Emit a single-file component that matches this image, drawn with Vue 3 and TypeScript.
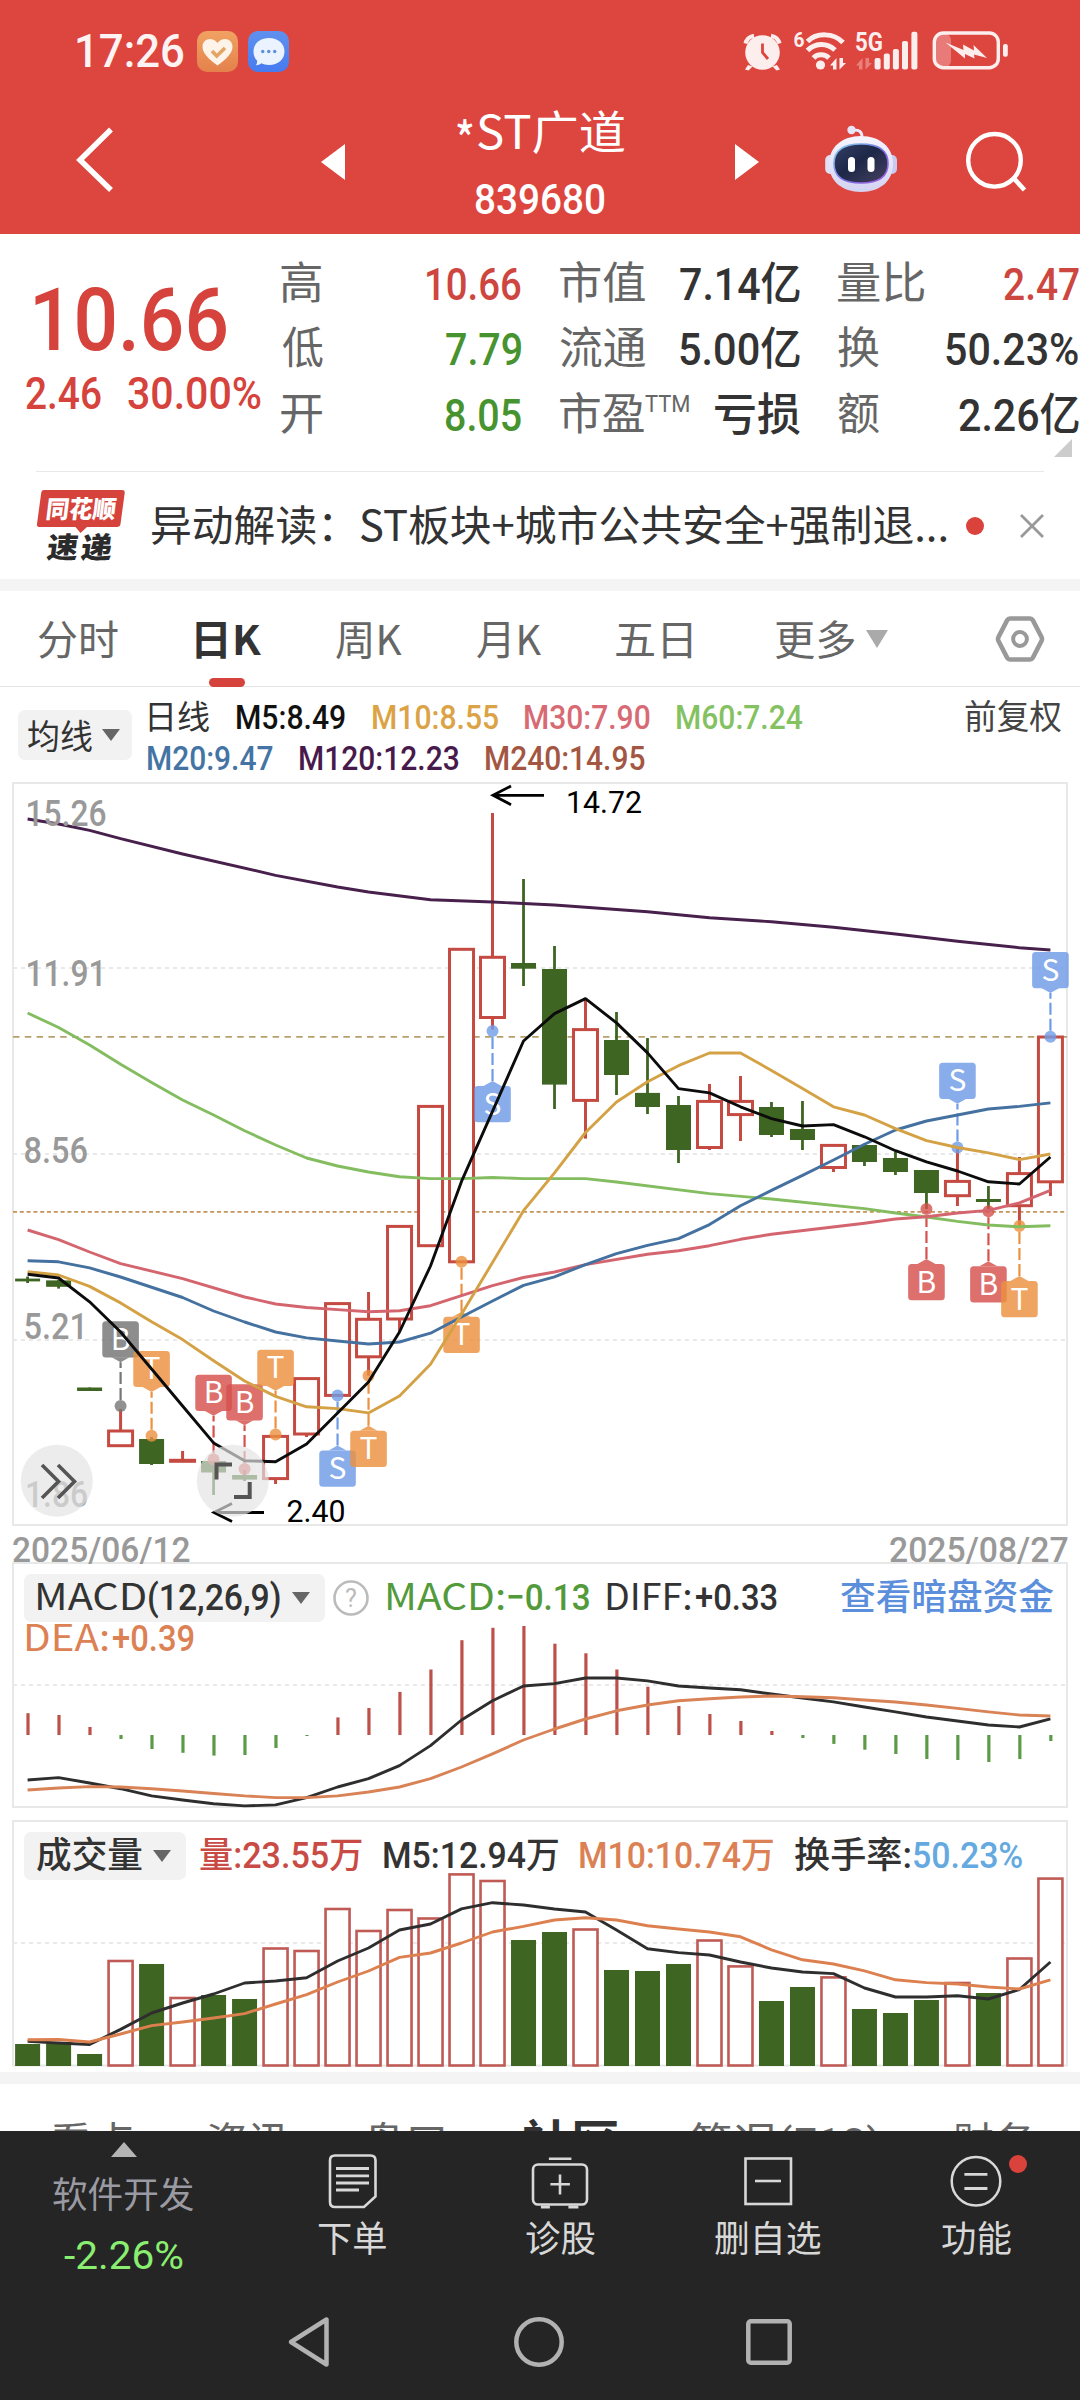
<script setup lang="ts">
type Tone = 'red' | 'green' | 'dark'
interface Stat { label: string; lw: number; value: string; vw: number; tone: Tone; sup?: string }
interface Legend { text: string; w: number; color: string }
interface Marker { i: number; t: string; dot: number; up: boolean; color: string }

/* Scales a text run horizontally so that its drawn glyphs span exactly the given width. */
const vFit = {
  mounted(el: HTMLElement, binding: { value: number }) {
    const cs = getComputedStyle(el)
    const ctx = document.createElement('canvas').getContext('2d')
    if (!ctx) return
    ctx.font = `${cs.fontWeight} ${cs.fontSize} ${cs.fontFamily}`
    const m = ctx.measureText((el.textContent || '').trim())
    const left = -m.actualBoundingBoxLeft
    const ink = m.actualBoundingBoxRight - left
    const box = el.getBoundingClientRect().width
    const s = binding.value / ink
    el.style.transformOrigin = '0 50%'
    el.style.transform = `scaleX(${s})`
    el.style.marginLeft = `${-left * s}px`
    el.style.marginRight = `${binding.value - box + left * s}px`
  },
}

const columns: Stat[][] = [
  [
    { label: '高', lw: 40.5, value: '10.66', vw: 94, tone: 'red' },
    { label: '低', lw: 41, value: '7.79', vw: 75, tone: 'green' },
    { label: '开', lw: 41, value: '8.05', vw: 75, tone: 'green' },
  ],
  [
    { label: '市值', lw: 85.5, value: '7.14亿', vw: 120, tone: 'dark' },
    { label: '流通', lw: 85.5, value: '5.00亿', vw: 120, tone: 'dark' },
    { label: '市盈', lw: 84.5, value: '亏损', vw: 85, tone: 'dark', sup: 'TTM' },
  ],
  [
    { label: '量比', lw: 86.5, value: '2.47', vw: 75, tone: 'red' },
    { label: '换', lw: 41, value: '50.23%', vw: 132.5, tone: 'dark' },
    { label: '额', lw: 41, value: '2.26亿', vw: 120, tone: 'dark' },
  ],
]

const maRow1: Legend[] = [
  { text: '日线', w: 60.8, color: '#333' },
  { text: 'M5:8.49', w: 108.5, color: '#111' },
  { text: 'M10:8.55', w: 125.4, color: '#dba346' },
  { text: 'M30:7.90', w: 125, color: '#d86a74' },
  { text: 'M60:7.24', w: 126, color: '#84c261' },
]
const maRow2: Legend[] = [
  { text: 'M20:9.47', w: 124.7, color: '#4474a4' },
  { text: 'M120:12.23', w: 159, color: '#481a4c' },
  { text: 'M240:14.95', w: 158.7, color: '#a35642' },
]

const X0 = 27.6
const STEP = 30.995
const cx = (i: number) => X0 + STEP * i
const line = (v: number[]) => v.map((y, i) => `${cx(i).toFixed(1)},${y}`).join(' ')
const sparse = (v: [number, number][]) => v.map(([i, y]) => `${cx(i).toFixed(1)},${y}`).join(' ')

/* open/close body top, body bottom, wick top, wick bottom, rising? */
const candles: [number, number, number, number, boolean][] = [
  [1278.6, 1281.4, 1276.5, 1283, false],
  [1280.4, 1286.8, 1280, 1288.6, false],
  [1387.5, 1391, 1387.5, 1391, false],
  [1431, 1445.7, 1409, 1431, true],
  [1439, 1464, 1437, 1465, false],
  [1460.3, 1461.3, 1451, 1460, true],
  [1461, 1472.5, 1461, 1495, false],
  [1475, 1479.6, 1470, 1481, false],
  [1436.4, 1478.6, 1478, 1484, true],
  [1378.6, 1434, 1434, 1437, true],
  [1303.6, 1395.4, 1395, 1395, true],
  [1319.3, 1356.8, 1292, 1375.7, true],
  [1226.4, 1319, 1319, 1332, true],
  [1106.4, 1245.7, 1245, 1245, true],
  [949.3, 1261.8, 1261, 1261, true],
  [957.3, 1017.5, 813, 1029.5, true],
  [963, 968.7, 879, 986, false],
  [969, 1084.6, 946, 1109, false],
  [1029.6, 1100.4, 999, 1138.6, true],
  [1040, 1075, 1012, 1095, false],
  [1092.9, 1107, 1038, 1114, false],
  [1105, 1150, 1096, 1163, false],
  [1101.4, 1147.5, 1084, 1150, true],
  [1101.4, 1114.6, 1076, 1141, true],
  [1107, 1135, 1102, 1137, false],
  [1129, 1140, 1101, 1150, false],
  [1145.4, 1167.5, 1167, 1172, true],
  [1145, 1162, 1145, 1166, false],
  [1158, 1172, 1152, 1175, false],
  [1170, 1193, 1170, 1209, false],
  [1181.4, 1195.7, 1147.5, 1206, true],
  [1199, 1202, 1186, 1209, false],
  [1173.6, 1205.7, 1157, 1226, true],
  [1037, 1181.8, 1181, 1196, true],
]

const BLUE = '#6f9ce6'
const ORANGE = '#ec9140'
const RED = '#d6514d'
const GRAY = '#757575'
const markers: Marker[] = [
  { i: 3, t: 'B', dot: 1406, up: true, color: GRAY },
  { i: 4, t: 'T', dot: 1435.7, up: true, color: ORANGE },
  { i: 6, t: 'B', dot: 1459.5, up: true, color: RED },
  { i: 7, t: 'B', dot: 1469, up: true, color: RED },
  { i: 8, t: 'T', dot: 1434.6, up: true, color: ORANGE },
  { i: 10, t: 'S', dot: 1395.6, up: false, color: BLUE },
  { i: 11, t: 'T', dot: 1375.7, up: false, color: ORANGE },
  { i: 14, t: 'T', dot: 1261.8, up: false, color: ORANGE },
  { i: 15, t: 'S', dot: 1031, up: false, color: BLUE },
  { i: 29, t: 'B', dot: 1209, up: false, color: RED },
  { i: 30, t: 'S', dot: 1147.6, up: true, color: BLUE },
  { i: 31, t: 'B', dot: 1211.2, up: false, color: RED },
  { i: 32, t: 'T', dot: 1226, up: false, color: ORANGE },
  { i: 33, t: 'S', dot: 1036.8, up: true, color: BLUE },
]
const boxTop = (m: Marker) => (m.up ? m.dot - 84.8 : m.dot + 55)
const pointer = (m: Marker) => {
  const x = cx(m.i)
  const y = boxTop(m)
  return m.up
    ? `${x - 9},${y + 36} ${x + 9},${y + 36} ${x},${y + 41}`
    : `${x - 9},${y} ${x + 9},${y} ${x},${y - 5}`
}

const m120 = sparse([[0, 819], [1, 824], [2, 830.3], [3, 838.7], [5, 854], [8, 875.3], [10, 887], [11, 892], [13, 899.7], [15, 902], [17, 905], [20, 911.7], [22, 917.7], [24, 921.8], [26, 927.3], [28, 934], [30, 941.3], [32, 947.7], [33, 950]])
const m60 = sparse([[0, 1013], [1, 1027.5], [2, 1045], [3, 1064.3], [4, 1082.5], [5, 1100], [6, 1115], [7, 1130.7], [8, 1145], [9, 1158], [10, 1166], [11, 1172], [12, 1176.8], [13, 1178.6], [14, 1178.6], [15, 1177.5], [16, 1178.6], [18, 1178.6], [19, 1182], [22, 1193.6], [24, 1199], [27, 1208.6], [28, 1213], [29, 1217], [30, 1221.4], [31, 1225], [32, 1226.8], [33, 1225.7]])
const m30 = sparse([[0, 1230], [1, 1239.6], [2, 1252], [3, 1263.6], [5, 1278.6], [7, 1297], [8, 1304], [9, 1307.5], [10, 1309.6], [11, 1311.8], [12, 1310.7], [13, 1305.7], [14, 1295.7], [15, 1285.7], [16, 1277.5], [17, 1272], [18, 1264.6], [20, 1254.3], [21, 1250.7], [22, 1245.7], [23, 1239.3], [24, 1234.3], [27, 1223.2], [28, 1219], [29, 1216.8], [30, 1213], [31, 1210.4], [32, 1202.9], [33, 1190.4]])
const m20 = sparse([[0, 1260.7], [1, 1261.8], [2, 1267.9], [3, 1277], [5, 1297.5], [6, 1311], [7, 1322], [8, 1332], [9, 1337.9], [10, 1341], [11, 1344], [12, 1342], [13, 1333.2], [14, 1317], [15, 1301], [16, 1285.4], [17, 1276.8], [18, 1264.6], [19, 1253.6], [20, 1245.4], [21, 1238.6], [22, 1224.6], [23, 1205.7], [24, 1190.4], [25, 1175.4], [26, 1160], [27, 1144.3], [28, 1130], [29, 1121], [30, 1115], [31, 1109], [32, 1106.4], [33, 1102.9]])
const m10 = line([1271.8, 1275, 1286.4, 1302.9, 1321.8, 1339.6, 1360.7, 1381, 1396.4, 1406.8, 1408.6, 1412.9, 1396, 1364.3, 1314.3, 1262.5, 1210.7, 1172.9, 1132.5, 1102, 1081.8, 1065.7, 1053, 1053, 1070.4, 1088.6, 1106.8, 1115, 1128.6, 1140.7, 1147.5, 1152.9, 1159.6, 1154])
const m5 = line([1274.3, 1278, 1301.8, 1332, 1369, 1406, 1442.9, 1460.7, 1461.8, 1444, 1413, 1382, 1332, 1266, 1181.4, 1111.4, 1041, 1013.6, 998.6, 1022.9, 1052.9, 1088.6, 1092.9, 1106.8, 1118.6, 1126, 1124.6, 1136.8, 1150.7, 1161.8, 1171, 1181.8, 1184, 1157])

const ZERO = 1735
const macd = [1713.2, 1715, 1727, 1739, 1749, 1752.8, 1755.6, 1755, 1748, 1736, 1717.4, 1708, 1691.9, 1669.5, 1640.2, 1627.8, 1626, 1643.7, 1653.3, 1669.5, 1686.7, 1706, 1714, 1721, 1731, 1738, 1743.9, 1749.7, 1754, 1759, 1760, 1762, 1759, 1741]
const diff = line([1780, 1777.6, 1783, 1788.7, 1795.9, 1800, 1803.8, 1805.9, 1804.9, 1797.6, 1787, 1778.7, 1765.6, 1745.6, 1720, 1700.8, 1686, 1683.6, 1678, 1678, 1680.9, 1686, 1688, 1689.8, 1694, 1698, 1701.9, 1707, 1711.9, 1717, 1721, 1725, 1727, 1718.8])
const dea = line([1790, 1788, 1786.6, 1787, 1788.7, 1791, 1793.5, 1795.9, 1797.6, 1797.6, 1795.9, 1792, 1787, 1778.7, 1767, 1753.9, 1740, 1729, 1719, 1710.8, 1705, 1700.8, 1698.8, 1697, 1696, 1696.7, 1697.7, 1700, 1702, 1705, 1708.4, 1711.9, 1715, 1716])

const FLOOR = 2065.5
const volTop = [2044, 2043, 2054, 1961, 1964, 1998, 1995, 1999, 1948.5, 1951, 1909, 1931, 1910, 1918.5, 1874.4, 1881, 1940, 1932, 1929.5, 1970, 1971, 1964, 1940.5, 1966.4, 2001, 1987, 1977.4, 2009, 2013, 2000, 1983, 1993, 1958.5, 1878.6]
const volM5 = line([2041.4, 2043, 2044.5, 2029.4, 2013, 2003, 1994, 1983, 1981, 1977.7, 1961, 1948, 1930, 1924, 1908.9, 1902.7, 1905, 1909, 1912, 1930, 1948.8, 1952.6, 1955, 1962, 1968, 1972, 1973.6, 1988, 1997, 1997, 1995.7, 1999, 1989.5, 1962])
const volM10 = line([2039.7, 2039.5, 2042, 2034, 2025.6, 2022, 2018, 2013.6, 2004, 1994.6, 1982, 1971, 1957.4, 1953, 1943, 1932, 1926.4, 1920, 1917.8, 1920, 1925.7, 1929, 1932, 1936.8, 1949.8, 1959.8, 1964, 1970.9, 1979.8, 1982.6, 1984, 1987, 1989, 1979.8])

const axis = [
  { t: '15.26', x: 25.5, y: 826, w: 81 },
  { t: '11.91', x: 25.5, y: 985.7, w: 81 },
  { t: '8.56', x: 23.5, y: 1162.5, w: 64.5 },
  { t: '5.21', x: 23.5, y: 1339.3, w: 64.5 },
  { t: '1.86', x: 25, y: 1507, w: 63 },
]
</script>

<template>
  <div class="screen" lang="zh-CN">
    <header class="top">
      <div class="status">
        <span class="clock" v-fit="107">17:26</span>
        <svg class="app-icon heart" width="41" height="41" viewBox="0 0 41 41">
          <defs>
            <linearGradient id="og" x1="0" y1="0" x2="0" y2="1"><stop offset="0" stop-color="#f0a262" /><stop offset="1" stop-color="#e4814c" /></linearGradient>
          </defs>
          <rect width="41" height="41" rx="10" fill="url(#og)" />
          <path d="M20.5 34.5C11 27.5 5.5 22 5.5 15.500C5.500 11 9 8 13 8c3 0 5.500 1.300 7.500 4c2-2.700 4.500-4 7.500-4c4 0 7.500 3 7.500 7.500C35.500 22 30 27.500 20.500 34.500z" fill="#fdf3e8" />
          <path d="M15 20l4.700 5L28 17" fill="none" stroke="#e3a566" stroke-width="3.600" />
        </svg>
        <svg class="app-icon" width="41" height="41" viewBox="0 0 41 41">
          <defs>
            <linearGradient id="bg" x1="0" y1="0" x2="0" y2="1"><stop offset="0" stop-color="#6090ee" /><stop offset="1" stop-color="#467bf0" /></linearGradient>
          </defs>
          <rect width="41" height="41" rx="10" fill="url(#bg)" />
          <path d="M21 7c9 0 15.500 5.600 15.500 13.500S30 34 21 34c-3 0-5.500-.700-7.500-1.700C12 33.500 10 34.300 7.800 34.300c1-1.300 1.500-3 1.300-4.800C6.500 27 5.500 24 5.500 20.500C5.500 12.600 12 7 21 7z" fill="#eaf3ff" />
          <g fill="#5b8fdd"><circle cx="14.700" cy="20.500" r="1.700" /><circle cx="20.700" cy="20.500" r="1.700" /><circle cx="26.700" cy="20.500" r="1.700" /></g>
        </svg>
        <svg class="signals" width="272" height="46" viewBox="740 28 272 46">
          <g fill="#fdeeee" stroke="none">
            <circle cx="763.500" cy="52.500" r="17.300" />
            <path d="M749 65l-3 4.500 3.500 1 4-4zM778 65l3 4.500-3.500 1-4-4z" />
          </g>
          <g fill="none" stroke="#fdeeee" stroke-width="4.200">
            <path d="M746.500 43.500c1-4 4-7 8.500-7.800M780.500 43.500c-1-4-4-7-8.500-7.800" />
          </g>
          <path d="M763.500 43.500v9l5.500 6.500" fill="none" stroke="#dd453f" stroke-width="2.800" />
          <text x="794.500" y="46.500" font-size="21" font-weight="700" textLength="11" lengthAdjust="spacingAndGlyphs" fill="#fdeeee">6</text>
          <g fill="none" stroke="#fdeeee" stroke-width="5">
            <path d="M808.500 41.500c9-9 26-9 35.500 1" />
            <path d="M808.500 50.500c7-7.500 19-8.500 27.500-.500" />
            <path d="M814.500 58c3.500-4 11-4.500 15.500 0" />
          </g>
          <circle cx="821.500" cy="65" r="4.600" fill="#fdeeee" />
          <g fill="#fdeeee">
            <path d="M831 65.500l6.500-7.500V69.500H834V65.500zM847 63l-6.500 6.500V58H844V63z" />
          </g>
          <g fill="#fdeeee" opacity=".35">
            <path d="M857 65.500l6.500-7.500V69.500H860V65.500zM873 63l-6.500 6.500V58H870V63z" />
          </g>
          <text x="856" y="50.700" font-size="26" font-weight="700" textLength="28" lengthAdjust="spacingAndGlyphs" fill="#fdeeee">5G</text>
          <g fill="#fdeeee">
            <rect x="875.600" y="58" width="6" height="11.500" rx="2" />
            <rect x="884.800" y="53.500" width="6" height="16" rx="2" />
            <rect x="893.900" y="49" width="6" height="20.500" rx="2" />
            <rect x="903" y="41" width="6" height="28.500" rx="2" />
            <rect x="912.400" y="31.700" width="6" height="37.800" rx="2" />
          </g>
          <rect x="936" y="34" width="16" height="33" rx="6" fill="#e87a77" />
          <rect x="935.300" y="33" width="64" height="34.700" rx="9" fill="none" stroke="#fdeeee" stroke-width="3.400" />
          <rect x="1004" y="44" width="4.800" height="12.700" rx="2" fill="#fdeeee" />
          <path d="M946.500 42.500l18 7.500-.500-5.500 11 6-.500-5.500L988 58l-13-3.500.500 4-9.500-4.500v4.500z" fill="#fdeeee" />
        </svg>
      </div>
      <nav class="nav">
        <svg class="back" width="40" height="68" viewBox="76 126 40 68"><path d="M111 129.500L80 160l31 30" fill="none" stroke="#fff" stroke-width="5.500" /></svg>
        <svg class="prev" width="24" height="36" viewBox="0 0 24 36"><path d="M0 18L24 0v36z" fill="#fff" /></svg>
        <div class="title">
          <div class="name"><span class="star" v-fit="16">*</span><span v-fit="147">ST广道</span></div>
          <div class="code"><span v-fit="128.5">839680</span></div>
        </div>
        <svg class="next" width="24" height="36" viewBox="0 0 24 36"><path d="M24 18L0 0v36z" fill="#fff" /></svg>
        <svg class="robot" width="72" height="68" viewBox="825 125 72 68">
          <defs>
            <linearGradient id="shell" x1="0" y1="0" x2="0" y2="1"><stop offset="0" stop-color="#f6f5fe" /><stop offset="1" stop-color="#d3d3f2" /></linearGradient>
            <linearGradient id="glass" x1="0" y1="0" x2="1" y2="1"><stop offset="0" stop-color="#353f66" /><stop offset=".45" stop-color="#1d2747" /><stop offset="1" stop-color="#47425f" /></linearGradient>
            <linearGradient id="rim" x1="0" y1="0" x2="1" y2="1"><stop offset="0" stop-color="#82d2ee" /><stop offset=".55" stop-color="#7a6fe0" /><stop offset="1" stop-color="#a45be0" /></linearGradient>
          </defs>
          <path d="M852 130.500c7-1.500 10 1.500 10 6" fill="none" stroke="#ecebfb" stroke-width="2.800" />
          <circle cx="851.500" cy="130" r="4.200" fill="#e6e5fa" />
          <rect x="825.200" y="155" width="10" height="19" rx="5" fill="#dfdff6" />
          <rect x="887" y="155" width="10" height="19" rx="5" fill="#c9caf0" />
          <path d="M861 136c19 0 32 11 32 28s-13 28-32 28s-32-11-32-28s13-28 32-28z" fill="url(#shell)" />
          <path d="M861 144c17 0 27 6 27 19.500S878 183 861 183s-27-6-27-19.500S844 144 861 144z" fill="url(#glass)" stroke="url(#rim)" stroke-width="1.600" />
          <rect x="848" y="157" width="7" height="15" rx="3.500" fill="#fff" />
          <rect x="867.500" y="157" width="7" height="15" rx="3.500" fill="#fff" />
        </svg>
        <svg class="search" width="62" height="62" viewBox="965 131 62 62"><circle cx="994.500" cy="160.300" r="26.300" fill="none" stroke="#fff" stroke-width="4.400" /><path d="M1013.500 178l11 12" stroke="#fff" stroke-width="4.600" /></svg>
      </nav>
    </header>

    <section class="quote">
      <div class="price">
        <div class="last"><span v-fit="191">10.66</span></div>
        <div class="chg"><span v-fit="75">2.46</span><span v-fit="132.4">30.00%</span></div>
      </div>
      <div v-for="(col, c) in columns" :key="c" class="col">
        <div v-for="s in col" :key="s.label" class="stat">
          <div class="lab"><span v-fit="s.lw">{{ s.label }}</span><span v-if="s.sup" class="sup" v-fit="43.7">{{ s.sup }}</span></div>
          <div class="val" :class="s.tone"><span v-fit="s.vw">{{ s.value }}</span></div>
        </div>
      </div>
    </section>
    <div class="corner"><svg width="18" height="18" viewBox="0 0 18 18"><path d="M18 0v18H0z" fill="#ccc" /></svg></div>

    <section class="news">
      <svg class="logo" width="90" height="76" viewBox="36 487 90 76">
        <path d="M44 489h78q3 0 2.700 3l-4.200 31q-.500 3-3.500 3H87l-6.500 6-5-6H40q-3.500 0-3-3l4.200-31q.400-3 2.800-3z" fill="#d5433c" />
        <text class="brand" x="0" y="0" transform="translate(45 517) skewX(-7)" font-size="24.500" textLength="70" lengthAdjust="spacingAndGlyphs" fill="#fff">同花顺</text>
        <text class="brand" x="0" y="0" transform="translate(46 557) skewX(-7)" font-size="29" textLength="31" lengthAdjust="spacingAndGlyphs" fill="#2b2b2b">速</text>
        <text class="brand" x="0" y="0" transform="translate(80 557) skewX(-7)" font-size="29" textLength="31" lengthAdjust="spacingAndGlyphs" fill="#2b2b2b">递</text>
      </svg>
      <span class="headline" v-fit="794.4">异动解读：ST板块+城市公共安全+强制退...</span>
      <i class="dot"></i>
      <svg class="close" width="24" height="24" viewBox="0 0 24 24"><path d="M1 1l22 22M23 1L1 23" stroke="#999" stroke-width="2.800" /></svg>
    </section>

    <nav class="tabs">
      <div class="tab t0"><span v-fit="80">分时</span></div>
      <div class="tab t1 active"><span v-fit="65.500">日K</span></div>
      <div class="tab t2"><span v-fit="66">周K</span></div>
      <div class="tab t3"><span v-fit="64.700">月K</span></div>
      <div class="tab t4"><span v-fit="76">五日</span></div>
      <div class="tab t5"><span v-fit="79.500">更多</span></div>
      <svg class="more" width="22" height="18" viewBox="0 0 22 18"><path d="M0 0h22L11 18z" fill="#aaa" /></svg>
      <svg class="gear" width="50" height="48" viewBox="0 0 50 48"><path d="M15 3.500h20q1.800 0 2.800 1.600L46.500 22q1 2 0 4L37.800 42.900q-1 1.600-2.800 1.600H15q-1.800 0-2.800-1.600L3.500 26q-1-2 0-4L12.200 5.100Q13.200 3.500 15 3.500z" fill="none" stroke="#999" stroke-width="4.600" /><circle cx="25" cy="24" r="6.900" fill="none" stroke="#999" stroke-width="4" /></svg>
    </nav>

    <section class="ma">
      <button class="chip machip"><span v-fit="64">均线</span><svg width="18" height="12" viewBox="0 0 18 12"><path d="M0 0h18L9 12z" fill="#666" /></svg></button>
      <div class="ma-rows">
        <div class="ma-row"><span v-for="l in maRow1" :key="l.text" v-fit="l.w" :style="{ color: l.color }">{{ l.text }}</span></div>
        <div class="ma-row"><span v-for="l in maRow2" :key="l.text" v-fit="l.w" :style="{ color: l.color }">{{ l.text }}</span></div>
      </div>
      <span class="fq" v-fit="96">前复权</span>
    </section>

    <svg class="chart" width="1080" height="748" viewBox="0 780 1080 748">
      <rect x="13" y="783" width="1054" height="742" fill="none" stroke="#e8e8e8" stroke-width="2" />
      <g stroke="#e9e9e9" stroke-width="2" stroke-dasharray="4 4"><path d="M13 968H1067M13 1154H1067M13 1340H1067" /></g>
      <path d="M13 1036.800H1067" stroke="#b8a06c" stroke-width="1.800" stroke-dasharray="6.500 5.300" />
      <path d="M13 1211.800H1067" stroke="#c4945a" stroke-width="1.800" stroke-dasharray="4 2.800" />
      <g v-for="(k, i) in candles" :key="i">
        <template v-if="k[4]">
          <rect :x="cx(i) - 12" :y="k[0]" width="24" :height="k[1] - k[0]" fill="#fff" stroke="#c44a42" stroke-width="3" />
          <path v-if="k[2] < k[0]" :d="`M${cx(i)} ${k[2]}V${k[0]}`" stroke="#c44a42" stroke-width="3" />
          <path v-if="k[3] > k[1]" :d="`M${cx(i)} ${k[1]}V${k[3]}`" stroke="#c44a42" stroke-width="3" />
        </template>
        <template v-else>
          <path :d="`M${cx(i)} ${k[2]}V${k[3]}`" stroke="#3e6522" stroke-width="2.800" />
          <rect :x="cx(i) - 12.5" :y="k[0]" width="25" :height="k[1] - k[0]" fill="#3e6522" />
        </template>
      </g>
      <g v-for="m in markers" :key="m.i">
        <path :d="m.up ? `M${cx(m.i)} ${m.dot - 6}V${boxTop(m) + 41}` : `M${cx(m.i)} ${m.dot + 6}V${boxTop(m) - 5}`" :stroke="m.color" stroke-width="2.200" stroke-dasharray="12 4" />
        <circle :cx="cx(m.i)" :cy="m.dot" r="6" :fill="m.color" opacity=".8" />
        <g opacity=".82">
          <rect :x="cx(m.i) - 18.3" :y="boxTop(m)" width="36.600" height="36.200" rx="3.500" :fill="m.color" />
          <polygon :points="pointer(m)" :fill="m.color" />
        </g>
        <text class="mk" :x="cx(m.i)" :y="boxTop(m) + 28.5" text-anchor="middle">{{ m.t }}</text>
      </g>
      <g fill="none" stroke-width="2.900" stroke-linejoin="round">
        <polyline :points="m120" stroke="#48204c" />
        <polyline :points="m60" stroke="#84bc60" />
        <polyline :points="m30" stroke="#d4656f" />
        <polyline :points="m20" stroke="#44719f" />
        <polyline :points="m10" stroke="#d4a144" />
        <polyline :points="m5" stroke="#0c0c0c" />
      </g>
      <g class="axis"><text v-for="a in axis" :key="a.t" :x="a.x" :y="a.y" :textLength="a.w" lengthAdjust="spacingAndGlyphs">{{ a.t }}</text></g>
      <g fill="none" stroke="#000" stroke-width="2.800">
        <path d="M544 795.300H493M511 786L493 795.300L511 804.700" />
        <path d="M264 1512.500H214M232 1503.500L214 1512.500L232 1521.500" />
      </g>
      <g class="tip">
        <text x="566" y="812.500" textLength="76" lengthAdjust="spacingAndGlyphs">14.72</text>
        <text x="286.500" y="1521.500" textLength="59" lengthAdjust="spacingAndGlyphs">2.40</text>
      </g>
      <g fill="#e4e4e4" opacity=".68"><circle cx="56.800" cy="1480.700" r="36" /><circle cx="232.800" cy="1480.700" r="36" /></g>
      <g fill="none" stroke="#555" stroke-width="3.600">
        <path d="M42 1465l16.500 16.500L42 1498M58 1465l16.500 16.500L58 1498" />
        <path d="M216.500 1479.500V1464.500H232M234 1497H249.700V1482" stroke-width="4" />
      </g>
    </svg>

    <div class="dates"><span v-fit="176.500">2025/06/12</span><span v-fit="177.500">2025/08/27</span></div>

    <section class="panel macd">
      <svg width="1080" height="248" viewBox="0 1561 1080 248">
        <rect x="13" y="1563" width="1054" height="244" fill="none" stroke="#e8e8e8" stroke-width="2" />
        <path d="M13 1685H1067" stroke="#e9e9e9" stroke-width="2" stroke-dasharray="4 4" />
        <path v-for="(y, i) in macd" :key="i" :d="`M${cx(i) + 0.4} ${ZERO}V${y}`" :stroke="y < ZERO ? '#bd5049' : '#5c9a47'" stroke-width="3.200" />
        <g fill="none" stroke-width="2.900" stroke-linejoin="round"><polyline :points="diff" stroke="#2e2e2e" /><polyline :points="dea" stroke="#d98255" /></g>
      </svg>
      <div class="over">
        <div class="row">
          <button class="chip wide"><span class="joined"><span v-fit="107.500">MACD</span><span v-fit="131">(12,26,9)</span></span><svg width="18" height="12" viewBox="0 0 18 12"><path d="M0 0h18L9 12z" fill="#666" /></svg></button>
          <svg class="help" width="36" height="36" viewBox="0 0 36 36"><circle cx="18" cy="18" r="16.500" fill="none" stroke="#bbb" stroke-width="2.600" /><text x="18" y="27" text-anchor="middle" font-size="25" fill="#bbb">?</text></svg>
          <span class="joined g"><span v-fit="116.500">MACD:</span><span v-fit="81">−0.13</span></span>
          <span class="joined d"><span v-fit="83.500">DIFF:</span><span v-fit="80.500">+0.33</span></span>
          <a class="link"><span v-fit="213">查看暗盘资金</span></a>
        </div>
        <div class="dea"><span class="joined"><span v-fit="81.500">DEA:</span><span v-fit="80.500">+0.39</span></span></div>
      </div>
    </section>

    <section class="panel vol">
      <svg width="1080" height="252" viewBox="0 1819 1080 252">
        <rect x="13" y="1821" width="1054" height="244.500" fill="none" stroke="#e8e8e8" stroke-width="2" />
        <path d="M13 1943H1067" stroke="#e9e9e9" stroke-width="2" stroke-dasharray="4 4" />
        <g v-for="(y, i) in volTop" :key="i">
          <rect v-if="candles[i][4]" :x="cx(i) - 12" :y="y" width="24" :height="FLOOR - y" fill="#fff" stroke="#bf5a55" stroke-width="2.600" />
          <rect v-else :x="cx(i) - 12.5" :y="y" width="25" :height="FLOOR + 0.5 - y" fill="#3e6522" />
        </g>
        <g fill="none" stroke-width="2.900" stroke-linejoin="round"><polyline :points="volM5" stroke="#2e2e2e" /><polyline :points="volM10" stroke="#dd8050" /></g>
      </svg>
      <div class="over">
        <div class="row">
          <button class="chip narrow"><span v-fit="105">成交量</span><svg width="18" height="12" viewBox="0 0 18 12"><path d="M0 0h18L9 12z" fill="#666" /></svg></button>
          <span class="v1" v-fit="161.500">量:23.55万</span>
        </div>
        <div class="row rest">
          <span v-fit="174">M5:12.94万</span>
          <span class="v3" v-fit="193">M10:10.74万</span>
          <span class="joined"><span v-fit="115.500">换手率:</span><span class="v4" v-fit="108">50.23%</span></span>
        </div>
      </div>
    </section>

    <nav class="subtabs">
      <span v-fit="83">看点</span><span v-fit="80">资讯</span><span v-fit="80">盘口</span><span class="on" v-fit="97">社区</span><span v-fit="188">简况(F10)</span><span v-fit="80">财务</span>
    </nav>

    <footer class="bottom">
      <div class="actions">
        <div class="sector">
          <svg width="26" height="15" viewBox="0 0 26 15"><path d="M0 15L13 0l13 15z" fill="#b5b5b5" /></svg>
          <div class="sname"><span v-fit="140.500">软件开发</span></div>
          <div class="spct"><span v-fit="119">-2.26%</span></div>
        </div>
        <div class="act a1">
          <svg width="60" height="60" viewBox="322 2151 60 60" fill="none" stroke="#d8d8d8" stroke-width="2.600"><path d="M335 2155.500h35.500q5 0 5 5v36L364 2207H335q-5 0-5-5v-41.500q0-5 5-5z" /><path d="M336 2168.500h33M336 2175.800h33M336 2183h33M336 2190h23" stroke-width="2.800" /></svg>
          <span v-fit="68.500">下单</span>
        </div>
        <div class="act a2">
          <svg width="60" height="60" viewBox="529.600 2151 60 60" fill="none" stroke="#d8d8d8" stroke-width="2.600"><rect x="532.600" y="2164.500" width="54" height="40" rx="5" /><path d="M548.500 2158.700h22.500M559.600 2174.500v20M550 2184.300h19.500" /><path d="M540.500 2207h9M568 2207h10" stroke-width="3" /></svg>
          <span v-fit="69">诊股</span>
        </div>
        <div class="act a3">
          <svg width="60" height="60" viewBox="737 2151 60 60" fill="none" stroke="#d8d8d8" stroke-width="2.600"><rect x="744.500" y="2158.500" width="45.500" height="45.500" /><path d="M754 2181h26" /></svg>
          <span v-fit="105.500">删自选</span>
        </div>
        <div class="act a4">
          <svg width="60" height="60" viewBox="945.600 2151 60 60" fill="none" stroke="#d8d8d8" stroke-width="2.500"><circle cx="975.600" cy="2181.300" r="24.300" /><path d="M964 2174.300h23M964 2188.500h23" stroke-width="2.800" /></svg>
          <span v-fit="69">功能</span>
          <i class="badge"></i>
        </div>
      </div>
      <div class="sysnav">
        <svg width="46" height="54" viewBox="0 0 46 54"><path d="M40.500 4.500v45L5 27z" fill="none" stroke="#b2b2b2" stroke-width="4.500" stroke-linejoin="round" /></svg>
        <svg width="50" height="50" viewBox="0 0 50 50"><circle cx="25" cy="25" r="22.700" fill="none" stroke="#b2b2b2" stroke-width="4.500" /></svg>
        <svg width="46" height="46" viewBox="0 0 46 46"><rect x="2.300" y="2.300" width="41.400" height="41.400" rx="2.500" fill="none" stroke="#b2b2b2" stroke-width="4.500" /></svg>
      </div>
    </footer>
  </div>
</template>

<style>
html, body { margin: 0; background: #fff; }
</style>

<style scoped>
.screen { width: 1080px; height: 2400px; overflow: hidden; background: #fff; color: #333; font-family: Roboto, "Noto Sans CJK SC", sans-serif; font-weight: 400; white-space: nowrap; display: flex; flex-direction: column; }
.screen > * { flex: none; }
span { display: inline-block; }
svg { display: block; flex: none; }
button { border: 0; padding: 0; margin: 0; font: inherit; color: inherit; }

.top { height: 234px; background: #dd453f; color: #fff; box-sizing: border-box; display: flex; flex-direction: column; }
.status { height: 88px; padding-left: 76.5px; display: flex; align-items: flex-start; }
.clock { font-size: 46px; font-weight: 500; line-height: 54px; margin-top: 24px; color: #fdf3f3; }
.app-icon { margin-top: 31px; margin-left: 10px; }
.heart { margin-left: 13px; }
.signals { margin-top: 28px; margin-left: 450.5px; }
.nav { height: 146px; display: flex; align-items: flex-start; }
.back { margin: 38px 0 0 76px; }
.prev { margin: 56px 0 0 205px; }
.title { margin-left: 111.5px; width: 169px; display: flex; flex-direction: column; align-items: center; }
.name { font-family: "Noto Sans CJK SC", sans-serif; font-size: 46px; line-height: 60px; margin-top: 11px; display: flex; gap: 6px; }
.star { font-weight: 500; position: relative; top: 7px; }
.code { font-size: 42px; font-weight: 500; line-height: 50px; margin-top: 15.5px; position: relative; left: -1px; }
.next { margin: 56px 0 0 109px; }
.robot { margin: 37px 0 0 66px; }
.search { margin: 43px 0 0 68px; }

.quote { height: 205px; display: flex; }
.price { width: 281.5px; color: #d5433c; font-weight: 500; }
.last { font-size: 88px; line-height: 100px; margin: 35.5px 0 0 35.5px; }
.chg { font-size: 44.5px; line-height: 50px; margin: -1px 0 0 25.5px; display: flex; gap: 27px; }
.col { width: 239.3px; padding-top: 17.5px; margin-right: 39.5px; }
.col:last-child { width: 240.4px; margin: 0 0 0 -1px; }
.stat { height: 65.6px; line-height: 65.6px; display: flex; justify-content: space-between; font-size: 45px; }
.lab { color: #666; display: flex; }
.lab span { font-size: 44px; }
.lab .sup { font-size: 24px; margin-top: -11px; }
.val { font-weight: 500; }
.red { color: #cd4640; }
.green { color: #47932f; }
.dark { color: #333; }
.corner { height: 32px; display: flex; justify-content: flex-end; padding-right: 8px; box-sizing: border-box; }

.news { height: 108px; margin: 0 36px; border-top: 1px solid #e8e8e8; box-sizing: border-box; display: flex; align-items: center; }
.logo { overflow: visible; margin-right: 26px; }
.brand { font-family: "Noto Sans CJK SC", sans-serif; font-weight: 900; }
.headline { font-family: "Noto Sans CJK SC", sans-serif; font-size: 42px; line-height: 50px; color: #333; position: relative; top: -3px; flex: none; }
.dot { width: 18px; height: 18px; border-radius: 50%; background: #d9433c; margin-left: 19.5px; }
.close { margin-left: 36px; }

.tabs { height: 108px; border-top: 12px solid #f4f4f4; border-bottom: 1px solid #e4e4e4; box-sizing: border-box; display: flex; color: #666; font-family: "Noto Sans CJK SC", sans-serif; font-size: 41px; }
.tab { height: 96px; line-height: 92px; }
.t0 { margin-left: 37.5px; }
.t1 { margin-left: 79px; }
.t2 { margin-left: 74.3px; }
.t3 { margin-left: 75px; }
.t4 { margin-left: 74px; }
.t5 { margin-left: 83px; }
.active { color: #333; font-weight: 700; position: relative; }
.active::after { content: ""; position: absolute; left: 12px; bottom: 0; width: 36px; height: 9px; border-radius: 5px; background: #d5433c; }
.more { margin: 39px 0 0 11px; }
.gear { margin: 24px 0 0 107.5px; }

.chip { background: #f2f2f2; border-radius: 7px; display: flex; align-items: center; color: #333; }
.ma { height: 93px; display: flex; }
.machip { width: 114px; height: 50px; margin: 22.5px 0 0 18px; padding-left: 10px; box-sizing: border-box; font-size: 34px; }
.machip svg { margin-left: 10px; }
.ma-rows { margin-left: 16px; font-size: 33.5px; font-weight: 500; flex: 1; }
.ma-row { display: flex; gap: 27px; height: 41px; line-height: 41px; }
.ma-row:first-child { margin-top: 9.5px; padding-left: 1px; }
.ma-row:first-child span:first-child { font-weight: 400; }
.fq { font-size: 34px; line-height: 41px; margin-top: 10px; color: #444; }
.ma::after { content: ""; width: 19.5px; }

.axis { font-size: 36px; font-weight: 500; fill: #999; }
.mk { font-family: "Noto Sans CJK SC", sans-serif; font-size: 30px; fill: #fff; }
.tip { font-size: 31px; fill: #000; }

.dates { height: 33px; line-height: 45px; padding: 0 13px; box-sizing: border-box; display: flex; justify-content: space-between; font-size: 35.5px; font-weight: 500; color: #999; }
.panel { display: grid; }
.panel > * { grid-area: 1 / 1; }
.macd { height: 248px; }
.vol { margin-top: 10px; height: 253px; }
.row { display: flex; align-items: center; height: 48px; }
.macd .row { padding: 13px 0 0 24px; font-size: 37px; line-height: 50px; }
.joined { display: flex; gap: 4.5px; }
.wide { width: 301px; height: 48px; padding-left: 13px; box-sizing: border-box; font-weight: 500; }
.wide .joined span:first-child, .g span:first-child, .d span:first-child, .dea .joined span:first-child { font-family: "Noto Sans CJK SC", sans-serif; font-weight: 400; font-size: 36.5px; position: relative; top: -3px; }
.wide svg { margin-left: 11.5px; }
.help { margin-left: 8px; }
.g { margin-left: 18px; color: #529a3a; font-weight: 500; }
.d { margin-left: 18.5px; font-weight: 500; }
.link { margin-left: 65px; color: #5b8fdc; font-weight: 500; }
.link span { font-size: 36px; }
.dea { padding-left: 26.5px; line-height: 34px; font-size: 37px; font-weight: 500; color: #dc8154; }
.vol .over { display: flex; align-items: center; height: 48px; padding: 13px 0 0 24px; font-size: 36px; line-height: 50px; font-weight: 500; }
.narrow { width: 162px; height: 48px; padding-left: 13px; margin-right: 14px; box-sizing: border-box; }
.narrow svg { margin-left: 11px; }
.v1 { color: #c84b45; }
.rest { gap: 22px; margin-left: 22px; }
.rest .joined { gap: 3.5px; }
.v3 { color: #dc8154; }
.v4 { color: #64a9e0; }

.subtabs { height: 59px; border-top: 12px solid #f4f4f4; box-sizing: border-box; overflow: hidden; display: flex; justify-content: space-between; padding: 0 46px 0 50px; color: #666; font-size: 41px; line-height: 118px; }
.subtabs span { flex: none; }
.on { font-weight: 700; font-size: 47px; color: #333; position: relative; left: 3px; }

.bottom { height: 269px; background: #252525; color: #d8d8d8; }
.actions { height: 154px; display: flex; font-size: 36px; }
.sector { width: 247px; margin-right: 1px; display: flex; flex-direction: column; align-items: center; }
.sector svg { margin-top: 11px; }
.sname { color: #9a9aa2; line-height: 44px; margin-top: 17px; }
.spct { color: #8aef70; font-size: 38px; line-height: 44px; margin-top: 15.5px; }
.act { width: 208px; display: flex; flex-direction: column; align-items: center; line-height: 44px; position: relative; }
.act svg { margin: 20px 0 7px; }
.badge { position: absolute; left: 137px; top: 24px; width: 18px; height: 18px; border-radius: 50%; background: #d9433c; }
.sysnav { display: flex; justify-content: center; align-items: center; height: 114px; gap: 182px; padding-right: 2px; }
</style>
